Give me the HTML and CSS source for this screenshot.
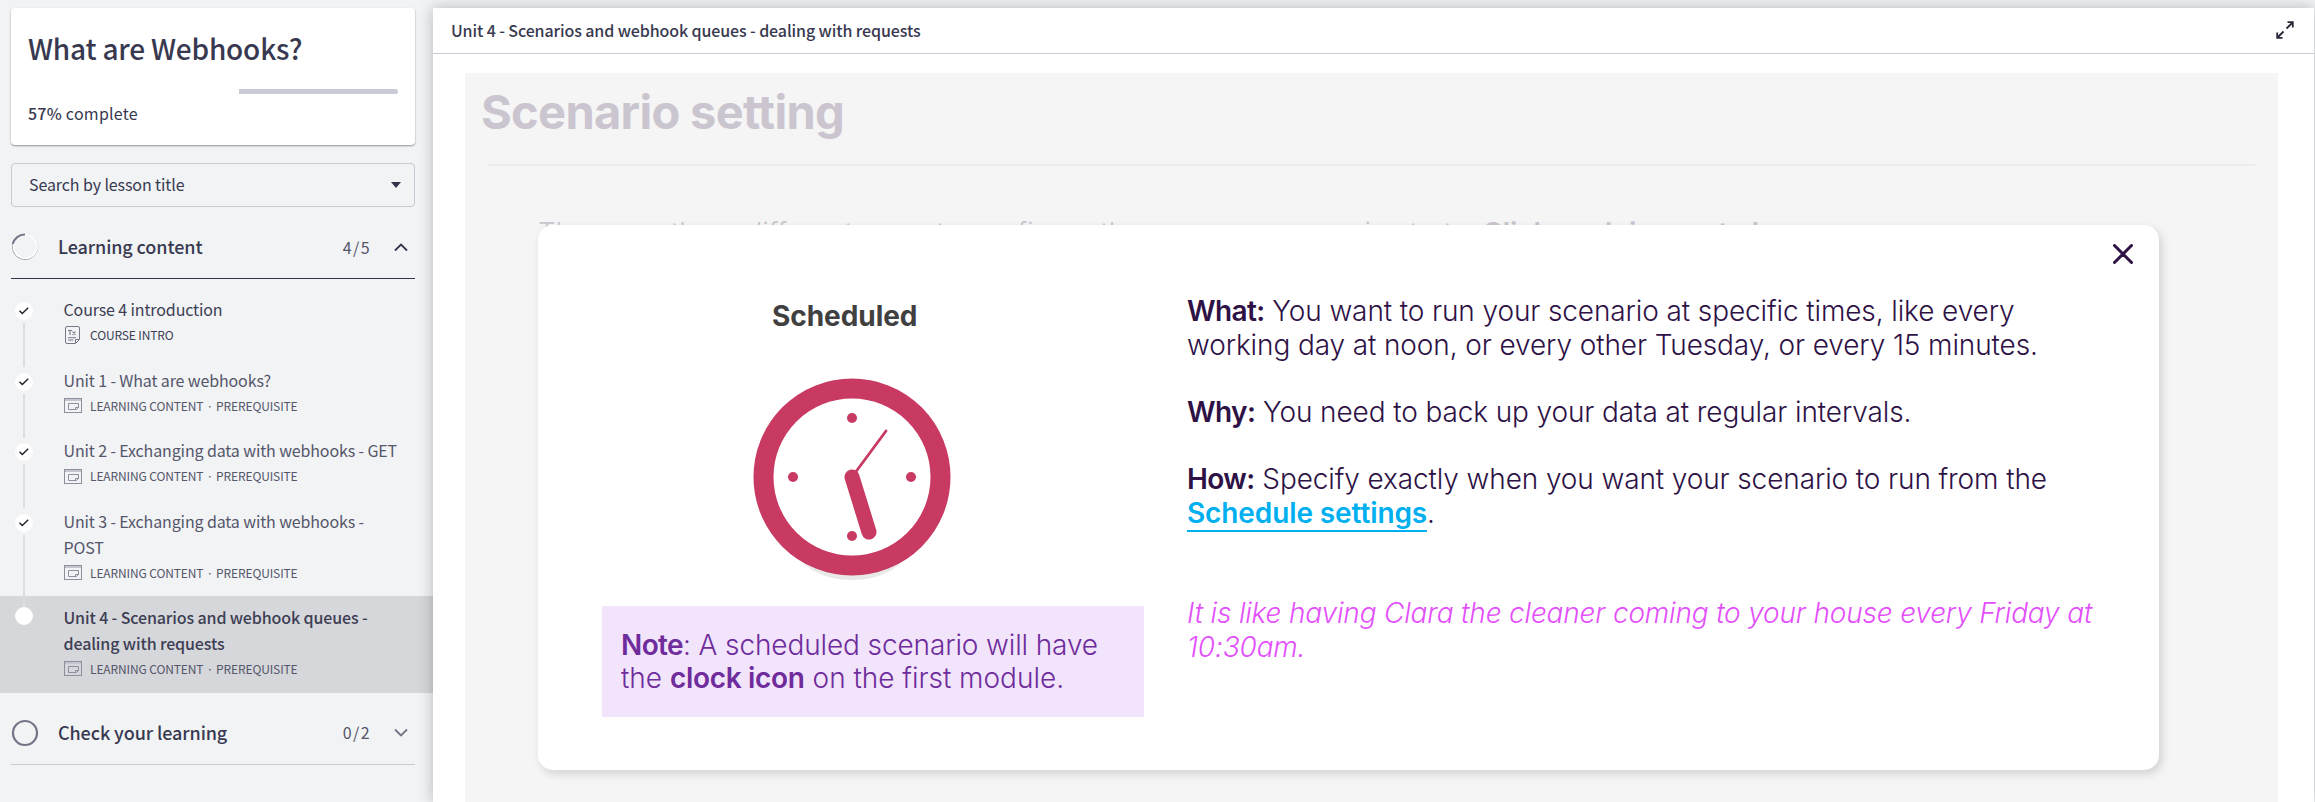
FILE: index.html
```html
<!DOCTYPE html>
<html lang="en">
<head>
<meta charset="utf-8">
<title>What are Webhooks?</title>
<link rel="stylesheet" href="styles.css">
</head>
<body>
<svg class="defs" width="0" height="0" aria-hidden="true">
  <symbol id="tick" viewBox="0 0 18 18"><path d="M4.5 8.700 7.3 11.500 13.2 5.800" fill="none" stroke="#20202c" stroke-width="1.4"/></symbol>
  <symbol id="lesson" viewBox="0 0 18 15"><rect x=".5" y=".5" width="17" height="14" fill="none" stroke="#8d8f9f"/><path d="M1 1H17V3H1z" fill="#c3c5cf"/><path d="M4.500 5.500H14.500V9.500L12.500 11.500H4.500zM14.500 9.500H11.500V11.500" fill="none" stroke="#8d8f9f"/></symbol>
</svg>
<aside class="sidebar">
  <section class="card">
    <h1 class="course">What are Webhooks?</h1>
    <div class="progress"><div class="rest"></div></div>
    <p class="percent"><b>57%</b> complete</p>
  </section>
  <div class="search"><span class="hint">Search by lesson title</span><i class="caret"></i></div>
  <div class="group open">
    <svg class="ring" viewBox="0 0 28 28"><circle cx="14" cy="14" r="12.500" fill="none" stroke="#8b8d9d" stroke-width="1"/><circle cx="14.300" cy="13.600" r="11.700" fill="none" stroke="#fff" stroke-width="1.800"/><path d="M1.800 11A12.300 12.300 0 0 1 14 1.500" fill="none" stroke="#737587" stroke-width="2"/></svg>
    <span class="name">Learning content</span><span class="count">4/5</span>
    <svg class="chev" viewBox="0 0 14 9"><path d="M1 7.500 7 1.500 13 7.500" fill="none" stroke="#33344a" stroke-width="1.800"/></svg>
  </div>
  <ul class="lessons">
    <li class="lesson"><span class="dot"><svg viewBox="0 0 18 18"><use href="#tick"/></svg></span><i class="rail"></i>
      <p class="title dark">Course 4 introduction</p>
      <p class="meta dark"><svg class="doc" viewBox="0 0 15 18"><path d="M2 .5H13Q14.500.5 14.500 2V13.500L10.500 17.500H2Q.5 17.500.5 16V2Q.5.5 2 .5zM14 13.500H10.500V17M3 11.700H11M3 14H8.500" fill="none" stroke="#777989"/><path d="M3 4.500H7M5 4.500V9M7.500 5.500 10.500 9M10.500 5.500 7.500 9" fill="none" stroke="#777989" stroke-width="1.100"/></svg>COURSE INTRO</p></li>
    <li class="lesson"><span class="dot"><svg viewBox="0 0 18 18"><use href="#tick"/></svg></span><i class="rail"></i>
      <p class="title">Unit 1 - What are webhooks?</p>
      <p class="meta"><svg class="pic"><use href="#lesson"/></svg>LEARNING CONTENT<span class="mid">·</span>PREREQUISITE</p></li>
    <li class="lesson"><span class="dot"><svg viewBox="0 0 18 18"><use href="#tick"/></svg></span><i class="rail"></i>
      <p class="title">Unit 2 - Exchanging data with webhooks - GET</p>
      <p class="meta"><svg class="pic"><use href="#lesson"/></svg>LEARNING CONTENT<span class="mid">·</span>PREREQUISITE</p></li>
    <li class="lesson tall"><span class="dot"><svg viewBox="0 0 18 18"><use href="#tick"/></svg></span><i class="rail"></i>
      <p class="title">Unit 3 - Exchanging data with webhooks -<br>POST</p>
      <p class="meta"><svg class="pic"><use href="#lesson"/></svg>LEARNING CONTENT<span class="mid">·</span>PREREQUISITE</p></li>
    <li class="lesson current"><span class="dot"></span>
      <p class="title">Unit 4 - Scenarios and webhook queues -<br>dealing with requests</p>
      <p class="meta"><svg class="pic"><use href="#lesson"/></svg>LEARNING CONTENT<span class="mid">·</span>PREREQUISITE</p></li>
  </ul>
  <div class="group">
    <svg class="ring" viewBox="0 0 28 28"><circle cx="14" cy="14" r="12" fill="none" stroke="#737587" stroke-width="2.200"/></svg>
    <span class="name">Check your learning</span><span class="count">0/2</span>
    <svg class="chev" viewBox="0 0 14 9"><path d="M1 1.500 7 7.500 13 1.500" fill="none" stroke="#737587" stroke-width="1.800"/></svg>
  </div>
</aside>
<main class="main">
  <header class="bar"><span class="unit">Unit 4 - Scenarios and webhook queues - dealing with requests</span>
    <svg class="expand" viewBox="0 0 18 18"><path d="M10.500 7.500 16.500 1.500M11.500 1.200H16.800V6.500M7.500 10.500 1.500 16.500M1.200 11.500V16.800H6.500" fill="none" stroke="#27283a" stroke-width="1.800"/></svg>
  </header>
  <div class="slide">
    <h2 class="heading">Scenario setting</h2>
    <hr class="rule">
    <p class="intro">There are three different ways to configure the way your scenario starts. <b>Click each image to learn.</b></p>
    <section class="modal">
      <svg class="close" viewBox="0 0 20 20"><path d="M1.500 1.500 18.500 18.500M18.500 1.500 1.500 18.500" stroke="#2e1246" stroke-width="3" stroke-linecap="round"/></svg>
      <div class="left">
        <h3 class="sched">Scheduled</h3>
        <svg class="clock" viewBox="-100 -100 200 206">
          <ellipse cx="0" cy="72" rx="54" ry="31" fill="#e9e9e9"/>
          <circle r="88.500" fill="#fff" stroke="#c83a62" stroke-width="20"/>
          <g fill="#c83a62"><circle cy="-59" r="5"/><circle cy="59" r="5"/><circle cx="-59" r="5"/><circle cx="59" r="5"/></g>
          <path d="M0 0 17 55" stroke="#c83a62" stroke-width="15" stroke-linecap="round"/>
          <path d="M0 0 34-46" stroke="#c83a62" stroke-width="2.800" stroke-linecap="round"/>
        </svg>
        <p class="note"><b>Note</b>: A scheduled scenario will have<br><span class="wide">the <b>clock icon</b> on the first module.</span></p>
      </div>
      <div class="right">
        <p><b>What:</b> You want to run your scenario at specific times, like every<br>working day at noon, or every other Tuesday, or every 15 minutes.</p>
        <p><b>Why:</b> You need to back up your data at regular intervals.</p>
        <p><b>How:</b> Specify exactly when you want your scenario to run from the<br><a class="link">Schedule settings</a>.</p>
        <p class="quote">It is like having Clara the cleaner coming to your house every Friday at<br>10:30am.</p>
      </div>
    </section>
  </div>
</main>
</body>
</html>
```
FILE: styles.css
```css
* { box-sizing: border-box; margin: 0; padding: 0; }
body {
  display: flex;
  width: 2315px;
  height: 802px;
  overflow: hidden;
  background: #f1f3f5;
  font-family: "Noto Sans CJK JP", "Noto Sans", sans-serif;
  color: #383950;
}
.defs { position: absolute; }
ul { list-style: none; }
.sidebar { width: 433px; padding-top: 8px; flex: none; }
.card {
  margin: 0 0 0 11px; width: 404px; height: 137px; padding: 20px 17px 0;
  background: #fff; border-radius: 4px; box-shadow: 0 1px 2px rgba(0,0,0,.4);
}
.course { font-size: 28px; line-height: 40px; font-weight: 500; letter-spacing: -.2px; white-space: nowrap; }
.progress { height: 5px; margin-top: 21px; display: flex; justify-content: flex-end; }
.rest { width: 159px; background: #c8cad6; border-radius: 0 2px 2px 0; }
.percent { font-size: 16px; line-height: 24px; margin-top: 7px; font-weight: 400; letter-spacing: .25px; }
.percent b { font-weight: 500; }
.search {
  margin: 18px 0 0 11px; width: 404px; height: 44px; padding: 0 13px 2px 17px;
  display: flex; align-items: center; justify-content: space-between;
  border: 1px solid #c8cad6; border-radius: 4px; font-size: 16px; line-height: 24px; letter-spacing: -.1px;
}
.caret { border: 5px solid transparent; border-top: 6px solid #33344a; border-bottom: 0; margin-top: 1px; }
.group {
  margin-left: 11px; width: 404px; height: 72px; padding-top: 9px; display: flex; align-items: center;
  border-bottom: 1px solid #c8cad6;
}
.group.open { border-color: #33344a; }
.ring { width: 28px; height: 28px; flex: none; }
.name { margin-left: 19px; padding-bottom: 2px; font-size: 18px; font-weight: 500; flex: 1; line-height: 26px; letter-spacing: -.1px; }
.count { font-size: 16px; letter-spacing: 1.400px; line-height: 24px; padding-bottom: 1px; color: #55566a; }
.chev { width: 14px; height: 9px; margin: 0 7px 0 23px; }
.lessons { padding-top: 13px; }
.lesson { position: relative; height: 70.500px; padding: 4px 0 0 63.500px; }
.lesson.tall { height: 92px; }
.lesson.current { height: 97px; padding-top: 8px; background: #d6d7db; }
.title { font-size: 16px; line-height: 26px; letter-spacing: -.125px; color: #55566a; white-space: nowrap; }
.title.dark, .meta.dark { color: #3d3e54; }
.current .title { font-weight: 500; color: #3d3e54; }
.meta { display: flex; align-items: center; height: 26px; font-size: 12px; line-height: 18px; letter-spacing: -.12px; color: #55566a; white-space: nowrap; }
.pic { width: 18px; height: 15px; margin-right: 8.500px; }
.doc { width: 15px; height: 18px; margin: 0 10px 0 1.500px; }
.mid { margin: 0 3px; }
.dot { position: absolute; left: 15px; top: 10px; width: 18px; height: 18px; border-radius: 50%; background: #fff; }
.dot svg { display: block; width: 18px; height: 18px; }
.current .dot { top: 11px; }
.rail { position: absolute; left: 23px; top: 31px; width: 2px; height: 44px; background: #dcdde2; }
.tall .rail { height: 71px; z-index: 1; }
.main { position: relative; width: 1881px; height: 794px; margin-top: 8px; background: #fff; box-shadow: 0 0 14px rgba(0,0,0,.25); }
.bar { height: 46px; padding: 0 20px 2px 18px; display: flex; align-items: center; justify-content: space-between; border-bottom: 1px solid #c8cad6; }
.unit { font-size: 16px; font-weight: 500; line-height: 24px; letter-spacing: -.11px; white-space: nowrap; }
.expand { width: 18px; height: 18px; }
.slide { margin: 19px 36px 0 32px; height: 729px; background: #f5f5f5; position: relative; overflow: hidden; font-family: Inter, sans-serif; color: #cbc5d0; }
.heading { margin-left: 16px; padding-top: 7px; font-size: 47px; line-height: 64px; font-weight: 700; letter-spacing: -.68px; white-space: nowrap; }
.rule { border: 0; height: 2px; margin: 20px 23px 0 22px; background: #ececec; }
.intro { margin: 50px 0 0 73px; font-size: 28px; line-height: 34px; font-weight: 300; letter-spacing: -.04px; white-space: nowrap; }
.intro b { font-weight: 600; letter-spacing: -.1px; }
.modal {
  position: absolute; left: 73px; top: 152px; width: 1621px; height: 545px; padding: 0 0 0 64px;
  display: flex; background: #fff; border-radius: 15px; box-shadow: 3px 4px 10px rgba(0,0,0,.14);
}
.close { position: absolute; right: 26px; top: 19px; width: 20px; height: 20px; }
.left { width: 542px; padding-top: 74px; }
.sched { padding-left: 170px; font-size: 28px; line-height: 34px; font-weight: 700; letter-spacing: -.05px; color: #404040; white-space: nowrap; }
.clock { display: block; width: 200px; height: 206px; margin: 44px 0 0 150px; }
.note { margin-top: 23px; height: 111px; padding: 22.500px 0 0 19px; background: #f1e4fb; color: #6f2c9c; font-size: 28px; line-height: 33.600px; font-weight: 300; letter-spacing: -.12px; white-space: nowrap; }
.note b, .right b { font-weight: 600; letter-spacing: -.6px; }
.note .wide { letter-spacing: -.02px; }
.note .wide b { letter-spacing: -.3px; }
.right { padding: 70px 0 0 43px; font-size: 28px; line-height: 33.600px; font-weight: 300; letter-spacing: -.11px; color: #2e1246; white-space: nowrap; }
.right p { margin-bottom: 33.600px; }
.link { font-weight: 600; color: #00aff0; border-bottom: 2px solid #00aff0; }
.right .quote { margin-top: 67px; font-style: italic; letter-spacing: -.18px; color: #e34ffb; }
```
